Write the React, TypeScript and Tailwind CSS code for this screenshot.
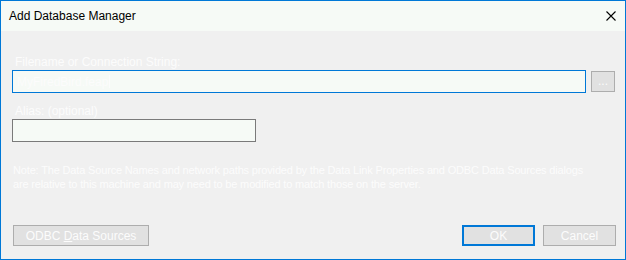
import React from 'react';

const font = { fontFamily: '"Liberation Sans", Arial, sans-serif' };

const App: React.FC = () => {
  return (
    <div
      className="w-[626px] h-[260px] flex flex-col border border-[#0078d7] bg-[#f0f0f0] text-[12px] overflow-hidden"
      style={font}
    >
      {/* Title bar */}
      <div className="h-[30px] shrink-0 flex items-center justify-between bg-[#f6faf6] pl-[8px] pr-[9px]">
        <span className="text-black leading-[16px]">Add Database Manager</span>
        <svg width="10" height="10" viewBox="0 0 10 10" className="block">
          <path d="M0.5 0.5 L9.5 9.5 M9.5 0.5 L0.5 9.5" stroke="#000" strokeWidth="1.1" />
        </svg>
      </div>

      {/* Body */}
      <div className="flex-1 flex flex-col pl-[11px] pr-[9px]">
        <div className="mt-[23px] h-[16px] leading-[16px] pl-[3px] text-[#fcfcfc]">
          Filename or Connection String:
        </div>
        <div className="flex items-center gap-[5px]">
          <div className="w-[574px] h-[23px] border border-[#0078d7] bg-[#f6faf6] flex items-center pl-[4px] text-[#fcfcfc]">
            MyFiredBird.feap
            <span className="inline-block w-px h-[13px] bg-[#fcfcfc] ml-px" />
          </div>
          <button className="w-[24px] h-[21px] border border-[#adadad] bg-[#e1e1e1] text-[#fcfcfc] leading-none pb-[2px]">
            ...
          </button>
        </div>

        <div className="mt-[10px] h-[16px] leading-[16px] pl-[3px] text-[#fcfcfc]">Alias: (optional)</div>
        <div className="w-[244px] h-[23px] border border-[#7a7a7a] bg-[#f6faf6]" />

        <p className="mt-[21px] pl-[1px] text-[11px] leading-[14px] tracking-[-0.16px] whitespace-nowrap text-[#fcfcfc]">
          Note: The Data Source Names and network paths provided by the Data Link Properties and ODBC Data Sources dialogs
          <br />
          are relative to this machine and may need to be modified to match those on the server.
        </p>

        <div className="mt-[34px] flex items-center justify-between">
          <button className="ml-[1px] w-[136px] h-[21px] border border-[#adadad] bg-[#e1e1e1] text-[#fcfcfc] leading-none">
            ODBC <span className="underline">D</span>ata Sources
          </button>
          <div className="flex gap-[8px]">
            <button className="w-[73px] h-[21px] border-2 border-[#0078d7] bg-[#e1e1e1] text-[#fcfcfc] leading-none">
              OK
            </button>
            <button className="w-[73px] h-[21px] border border-[#adadad] bg-[#e1e1e1] text-[#fcfcfc] leading-none">
              Cancel
            </button>
          </div>
        </div>
      </div>
    </div>
  );
};

export default App;
